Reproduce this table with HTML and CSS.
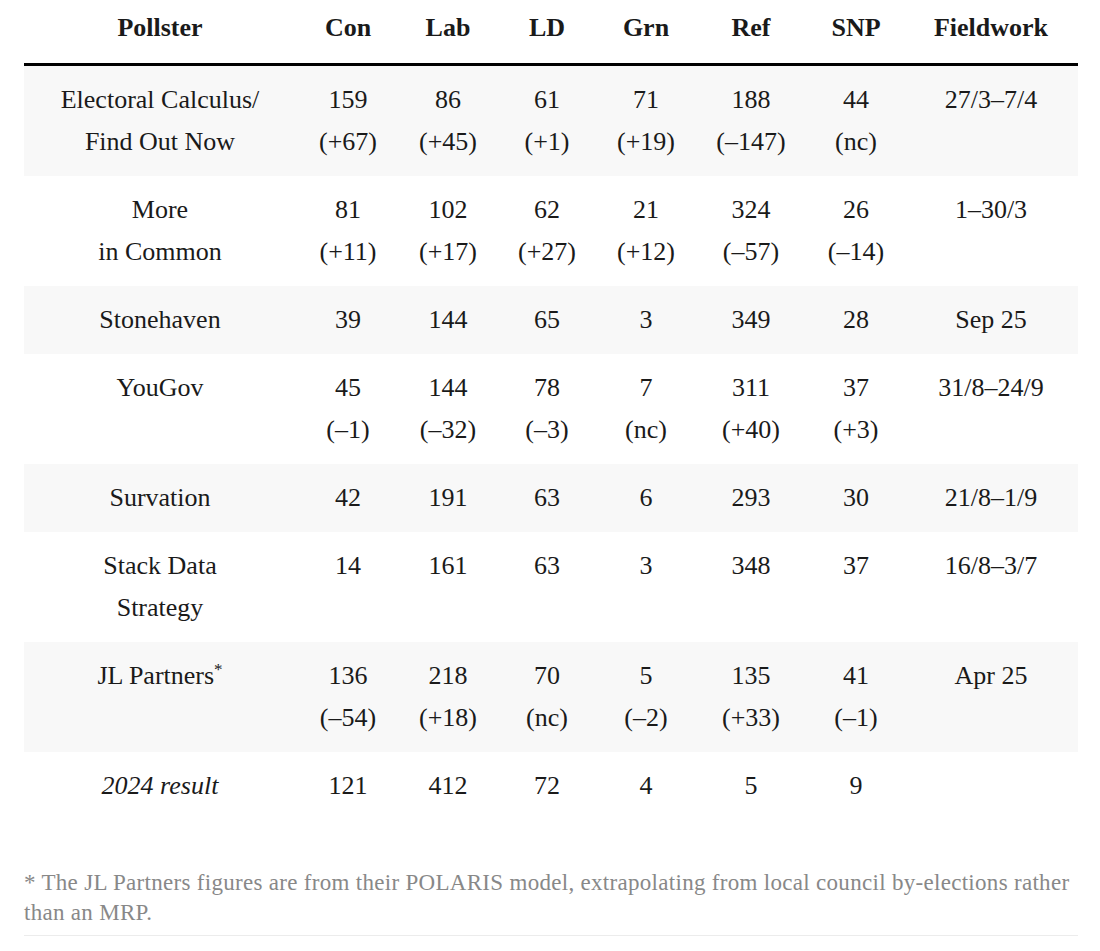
FILE: index.html
```html
<!DOCTYPE html>
<html lang="en">
<head>
    <meta charset="UTF-8">
    <title>MRP seat projections</title>
    <link rel="stylesheet" href="styles.css">
</head>
<body>
    <div class="wrap">
        <table class="polls">
            <colgroup>
                <col class="c-name">
                <col class="c-con">
                <col class="c-lab">
                <col class="c-ld">
                <col class="c-grn">
                <col class="c-ref">
                <col class="c-snp">
                <col class="c-date">
            </colgroup>
            <thead>
                <tr>
                    <th>Pollster</th>
                    <th>Con</th>
                    <th>Lab</th>
                    <th>LD</th>
                    <th>Grn</th>
                    <th>Ref</th>
                    <th>SNP</th>
                    <th>Fieldwork</th>
                </tr>
            </thead>
            <tbody>
                <tr>
                    <td>Electoral Calculus/<br>Find Out Now</td>
                    <td>159<br>(+67)</td>
                    <td>86<br>(+45)</td>
                    <td>61<br>(+1)</td>
                    <td>71<br>(+19)</td>
                    <td>188<br>(–147)</td>
                    <td>44<br>(nc)</td>
                    <td>27/3–7/4</td>
                </tr>
                <tr>
                    <td>More<br>in Common</td>
                    <td>81<br>(+11)</td>
                    <td>102<br>(+17)</td>
                    <td>62<br>(+27)</td>
                    <td>21<br>(+12)</td>
                    <td>324<br>(–57)</td>
                    <td>26<br>(–14)</td>
                    <td>1–30/3</td>
                </tr>
                <tr>
                    <td>Stonehaven</td>
                    <td>39</td>
                    <td>144</td>
                    <td>65</td>
                    <td>3</td>
                    <td>349</td>
                    <td>28</td>
                    <td>Sep 25</td>
                </tr>
                <tr>
                    <td>YouGov</td>
                    <td>45<br>(–1)</td>
                    <td>144<br>(–32)</td>
                    <td>78<br>(–3)</td>
                    <td>7<br>(nc)</td>
                    <td>311<br>(+40)</td>
                    <td>37<br>(+3)</td>
                    <td>31/8–24/9</td>
                </tr>
                <tr>
                    <td>Survation</td>
                    <td>42</td>
                    <td>191</td>
                    <td>63</td>
                    <td>6</td>
                    <td>293</td>
                    <td>30</td>
                    <td>21/8–1/9</td>
                </tr>
                <tr>
                    <td>Stack Data<br>Strategy</td>
                    <td>14</td>
                    <td>161</td>
                    <td>63</td>
                    <td>3</td>
                    <td>348</td>
                    <td>37</td>
                    <td>16/8–3/7</td>
                </tr>
                <tr>
                    <td>JL Partners<sup>*</sup></td>
                    <td>136<br>(–54)</td>
                    <td>218<br>(+18)</td>
                    <td>70<br>(nc)</td>
                    <td>5<br>(–2)</td>
                    <td>135<br>(+33)</td>
                    <td>41<br>(–1)</td>
                    <td>Apr 25</td>
                </tr>
                <tr class="result">
                    <td><em>2024 result</em></td>
                    <td>121</td>
                    <td>412</td>
                    <td>72</td>
                    <td>4</td>
                    <td>5</td>
                    <td>9</td>
                    <td></td>
                </tr>
            </tbody>
        </table>
        <p class="note">* The JL Partners figures are from their POLARIS model, extrapolating from local council by-elections rather than an MRP.</p>
    </div>
</body>
</html>
```

FILE: styles.css
```css
body {
    margin: 0;
    background: #fff;
    font-family: 'Liberation Serif', serif;
    color: #1a1a1a;
}
.wrap {
    width: 1054px;
    margin: 0 0 0 24px;
}
.polls {
    width: 100%;
    border-collapse: collapse;
    table-layout: fixed;
    font-size: 26px;
}
.c-name { width: 272px; }
.c-con { width: 104px; }
.c-lab { width: 96px; }
.c-ld { width: 102px; }
.c-grn { width: 96px; }
.c-ref { width: 114px; }
.c-snp { width: 96px; }
.c-date { width: 174px; }
th {
    font-weight: bold;
    text-align: center;
    height: 63px;
    padding: 0 0 7px;
    line-height: 56px;
    border-bottom: 3px solid #000;
    box-sizing: border-box;
}
td {
    text-align: center;
    vertical-align: top;
    line-height: 42px;
    padding: 13px 0;
}
tbody tr:nth-child(odd) {
    background: #f8f8f8;
}
tr.result td {
    padding-bottom: 16px;
}
sup {
    font-size: 17px;
    line-height: 0;
    vertical-align: 9px;
}
.note {
    margin: 45px 0 0;
    padding-bottom: 7px;
    border-bottom: 1px solid #ececec;
    font-size: 23px;
    letter-spacing: 0.3px;
    line-height: 30px;
    color: #888;
}
```
